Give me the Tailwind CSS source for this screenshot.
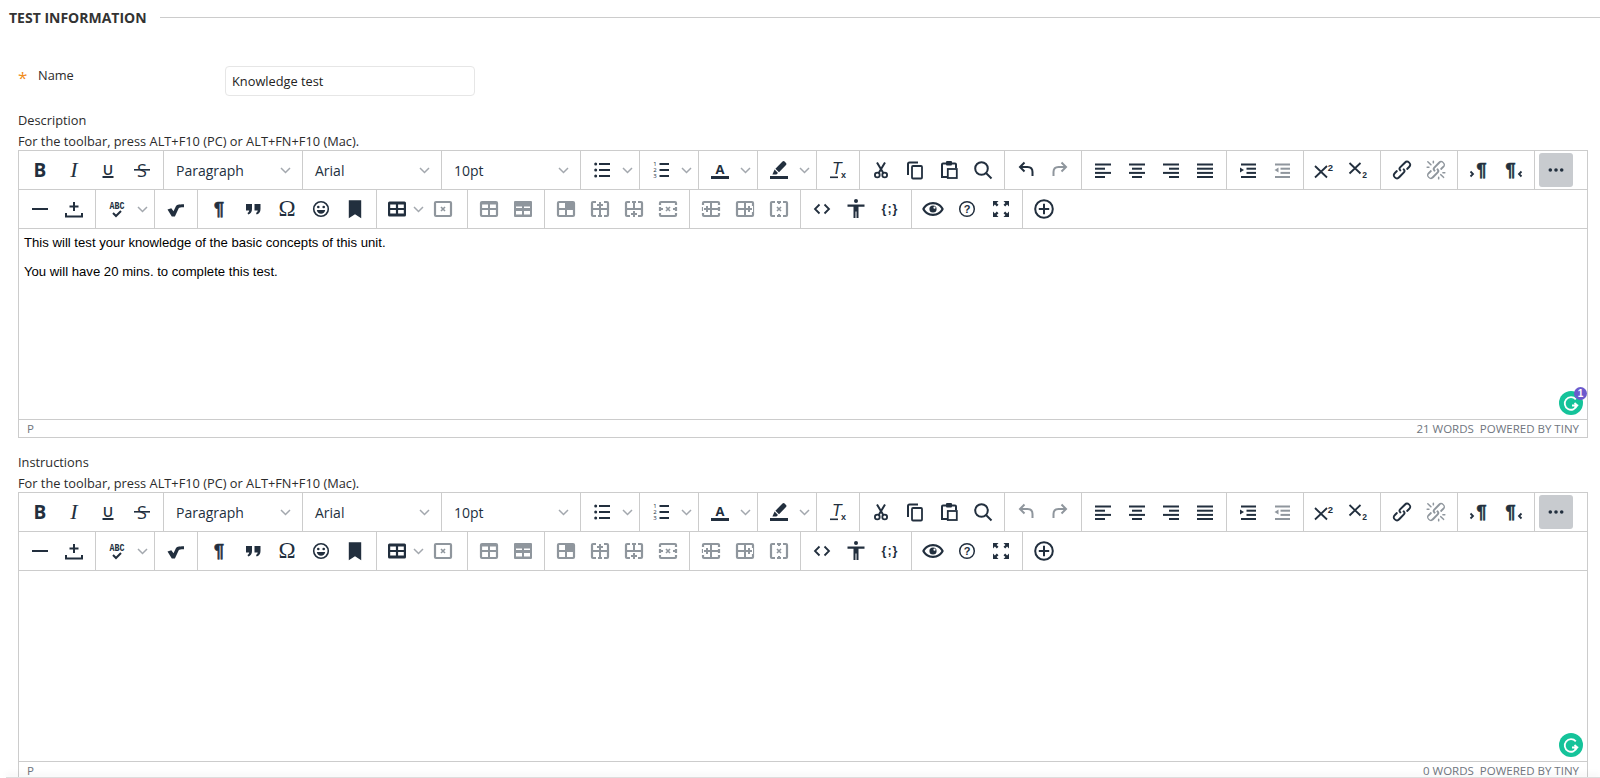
<!DOCTYPE html>
<html lang="en">

<head>
  <meta charset="UTF-8" />
  <meta name="viewport" content="width=device-width, initial-scale=1.0" />
  <title>Test Information</title>
  <script src="https://cdn.jsdelivr.net/npm/@tailwindcss/browser@4"></script>
</head>

<body class="h-screen overflow-hidden bg-white font-['Open_Sans',sans-serif] text-[12.8px] text-[#2b2b2b]">
  <main class="pl-[18px] pr-[12px]">
    <!-- Section heading -->
    <div class="-ml-[9px] -mr-[12px] h-[35px] flex items-center">
      <h1 class="text-[14px] font-bold text-[#333] whitespace-nowrap">TEST INFORMATION</h1>
      <div class="flex-1 ml-[13px] h-px bg-[#ccc]"></div>
    </div>

    <!-- Name -->
    <div class="mt-[31px] flex h-[30px]">
      <span class="w-[20px] pt-[3px] text-[17px] leading-none text-[#f08c1a]">*</span>
      <label class="w-[187px] leading-[18px]">Name</label>
      <div class="w-[250px] h-[30px] border border-[#e6e6e6] rounded-[4px] px-[6px] pt-px flex items-center text-[#222]">Knowledge test</div>
    </div>

    <div id="description" class="mt-[14px]"></div>
    <div id="instructions" class="mt-[14px]"></div>
  </main>

  <!-- Page footer edge -->
  <div class="fixed bottom-0 left-[6px] right-0 h-px bg-[#ddd] shadow-[0_-2px_6px_rgba(0,0,0,0.18)]"></div>

  <script>
    const svg = (inner) => `<svg width="24" height="24" viewBox="0 0 24 24" fill="currentColor">${inner}</svg>`;
    const btn = (inner, cls = "text-[#222f3e]") => `<div class="w-[34px] h-[34px] shrink-0 flex items-center justify-center ${cls}">${svg(inner)}</div>`;
    const off = "text-[#8f969d]";
    const chevron = `<svg width="11" height="7" viewBox="0 0 11 7" fill="none" stroke="#a3a8ae" stroke-width="1.5"><path d="M1 1l4.5 4.5L10 1" /></svg>`;
    const split = (inner) => `<div class="flex items-center">${btn(inner)}<div class="w-[16px] flex justify-center">${chevron}</div></div>`;
    const group = (inner) => `<div class="flex items-center pl-[4px] pr-[4px] border-r border-[#ccc] shrink-0">${inner}</div>`;
    const select = (label) => `<div class="w-[139px] shrink-0 h-full flex items-center justify-between pl-[12px] pr-[11px] border-r border-[#ccc] text-[14px] text-[#222f3e]"><span>${label}</span>${chevron}</div>`;
    const text = (x, y, size, body, extra = "") => `<text x="${x}" y="${y}" font-size="${size}" text-anchor="middle" ${extra}>${body}</text>`;
    const openSans = `font-family="Open Sans"`;
    const sansBold = `font-family="Liberation Sans" font-weight="700"`;
    const pilcrow = `${sansBold} stroke="currentColor" stroke-width="0.6"`;
    const lines = (rows) => rows.map(([x, y, w]) => `<rect x="${x}" y="${y}" width="${w}" height="2" />`).join("");
    const stroke = (d, w = 2) => `<path d="${d}" fill="none" stroke="currentColor" stroke-width="${w}" />`;

    const link = `<path d="M6.2 12.3a1 1 0 0 1 1.4 1.4l-2 2a2 2 0 1 0 2.8 2.8l4.8-4.8a1 1 0 0 0 0-1.4 1 1 0 1 1 1.4-1.3 2.9 2.9 0 0 1 0 4L9.9 20a4 4 0 1 1-5.7-5.7l2-2zm11.6-.6a1 1 0 0 1-1.4-1.4l2-2a2 2 0 1 0-2.8-2.8L10.8 10a1 1 0 0 0 0 1.4 1 1 0 1 1-1.4 1.3 2.9 2.9 0 0 1 0-4L14.1 4a4 4 0 1 1 5.7 5.7l-2 2z" />`;
    const unlink = `<path d="M6.2 12.3a1 1 0 0 1 1.4 1.4l-2.1 2a2 2 0 1 0 2.7 2.8l4.8-4.8a1 1 0 0 0 0-1.4 1 1 0 1 1 1.4-1.3 2.9 2.9 0 0 1 0 4L9.6 20a3.9 3.9 0 0 1-5.5-5.5l2-2zm11.6-.6a1 1 0 0 1-1.4-1.4l2.1-2a2 2 0 1 0-2.7-2.8L11 10.3a1 1 0 0 0 0 1.4A1 1 0 1 1 9.6 13a2.9 2.9 0 0 1 0-4L14.4 4a3.9 3.9 0 0 1 5.5 5.5l-2 2zM7.6 6.3a.8.8 0 0 1-1 1.1L3.3 4.2a.7.7 0 1 1 1-1l3.2 3.1zM5.1 8.6a.8.8 0 0 1 0 1.5H3a.8.8 0 0 1 0-1.5H5zm5-3.5a.8.8 0 0 1-1.5 0V3a.8.8 0 0 1 1.5 0v2zm6 11.8a.8.8 0 0 1 1-1l3.2 3.2a.8.8 0 0 1-1 1L16 17zm-2.2 2a.8.8 0 0 1 1.5 0V21a.8.8 0 0 1-1.5 0V19zm5-3.5a.7.7 0 1 1 0-1.5H21a.8.8 0 0 1 0 1.5H19z" />`;

    // grey table icons share one frame
    const frame = `<rect x="4" y="5" width="16" height="14" rx="1" fill="none" stroke="currentColor" stroke-width="2.2" />`;
    const mid = `<rect x="4" y="11" width="16" height="2" />`;
    const centre = `<rect x="11" y="5" width="2" height="14" />`;
    const gaps = `<path d="M8 3h2v3H8zM14 3h2v3h-2zM8 18h2v3H8zM14 18h2v3h-2z" fill="#fff" />`;
    const sideGaps = `<path d="M2 8h3.500v2H2zM2 14h3.500v2H2zM18.500 8H22v2h-3.500zM18.500 14H22v2h-3.500z" fill="#fff" />`;
    const plus = (x, y) => `<path d="M${x - 1} ${y - 3}h2v2h2v2h-2v2h-2v-2h-2v-2h2z" />`;
    const cross = (x, y) => stroke(`M${x - 2} ${y - 2}l4 4M${x + 2} ${y - 2}l-4 4`, 1.6);

    function toolbar(undoCls) {
      return `
        <div class="flex h-[39px] border-b border-[#ccc]">
          ${group(
            btn(text(12, 18.5, 19, "B", `${openSans} font-weight="700"`)) +
            btn(text(12, 19, 22, "I", `font-family="Liberation Serif" font-style="italic"`)) +
            btn(text(12, 16.5, 14, "U", `${openSans} font-weight="600"`) + `<rect x="6.500" y="18" width="11" height="2" />`) +
            btn(text(12, 18.500, 18, "S", `${openSans} font-weight="500"`) + `<rect x="4" y="11" width="16" height="1.6" />`)
          )}
          ${select("Paragraph")}${select("Arial")}${select("10pt")}
          ${group(split(`<circle cx="5.7" cy="6" r="1.5" /><circle cx="5.7" cy="12" r="1.5" /><circle cx="5.7" cy="18" r="1.5" />` + lines([[9, 5, 11], [9, 11, 11], [9, 17, 11]])))}
          ${group(split(text(6, 8, 6, "1", openSans) + text(6, 14, 6, "2", openSans) + text(6, 20, 6, "3", openSans) + lines([[10.5, 5, 9.5], [10.5, 11, 9.5], [10.5, 17, 9.5]])))}
          ${group(split(text(12, 16, 13, "A", `${openSans} font-weight="700"`) + `<rect x="3" y="18" width="18" height="3" />`))}
          ${group(split(`<path d="M15.5 3.6a1.5 1.5 0 0 1 2.1 0l1.4 1.4a1.5 1.5 0 0 1 0 2.1L12 14.2 8.4 10.7zM7.6 11.6l3.4 3.4-1.6 1.4H5.4z" /><rect x="3" y="18" width="18" height="3" />`))}
          ${group(btn(text(11, 16, 16, "T", `font-family="Liberation Sans" font-style="italic"`) + `<rect x="4" y="18.5" width="8" height="1.6" />` + text(17.5, 19.5, 9, "x", sansBold)))}
          ${group(
            btn(`<circle cx="8.3" cy="17" r="2.4" fill="none" stroke="currentColor" stroke-width="1.8" /><circle cx="15.7" cy="17" r="2.4" fill="none" stroke="currentColor" stroke-width="1.8" />` + stroke("M9.7 15L16 4.5M14.3 15L8 4.5")) +
            btn(stroke("M15 4.5H6.5A1.5 1.5 0 0 0 5 6v11") + `<rect x="9" y="8" width="10" height="12.5" rx="1" fill="none" stroke="currentColor" stroke-width="1.8" />`) +
            btn(stroke("M9 5.5H6A1 1 0 0 0 5 6.5V19h5M15 5.5h3a1 1 0 0 1 1 1V10") + `<rect x="9" y="3" width="6" height="4.500" rx="1" /><rect x="10.8" y="11" width="9" height="9" fill="none" stroke="currentColor" stroke-width="1.8" />`) +
            btn(`<circle cx="10.5" cy="10.5" r="6.3" fill="none" stroke="currentColor" stroke-width="2" />` + stroke("M15 15l5.5 5.5"))
          )}
          ${group(
            btn(stroke("M6 9h7.5c3 0 5 2 5 5v4M10.5 4.5L6 9l4.5 4.5"), undoCls) +
            btn(stroke("M18 9h-7.5c-3 0-5 2-5 5v4M13.5 4.5L18 9l-4.5 4.5"), off)
          )}
          ${group(
            btn(lines([[4, 5.5, 16], [4, 9.7, 10], [4, 13.9, 16], [4, 18, 10]])) +
            btn(lines([[4, 5.5, 16], [7, 9.7, 10], [4, 13.9, 16], [7, 18, 10]])) +
            btn(lines([[4, 5.5, 16], [10, 9.7, 10], [4, 13.9, 16], [10, 18, 10]])) +
            btn(lines([[4, 5.5, 16], [4, 9.7, 16], [4, 13.9, 16], [4, 18, 16]]))
          )}
          ${group(
            btn(lines([[5, 5.5, 15], [10.5, 9.7, 9.5], [10.5, 13.9, 9.5], [5, 18, 15]]) + `<path d="M4 9.500l4 2.500-4 2.500z" />`) +
            btn(lines([[5, 5.5, 15], [10.5, 9.7, 9.5], [10.5, 13.9, 9.5], [5, 18, 15]]) + `<path d="M8.500 9.500l-4 2.500 4 2.500z" />`, off)
          )}
          ${group(
            btn(stroke("M2 8l12 11.500M14 8L2 19.500", 1.800) + text(17.5, 12.500, 9.500, "2", sansBold)) +
            btn(stroke("M2.500 5l11 10.500M13.500 5l-11 10.500", 1.800) + text(17.5, 19.500, 8.500, "2", sansBold))
          )}
          ${group(btn(link) + btn(unlink, off))}
          ${group(
            btn(text(14.500, 18, 18, "¶", pilcrow) + stroke("M3.500 13.500l2.500 2.500-2.500 2.500", 1.800)) +
            btn(text(9.500, 18, 18, "¶", pilcrow) + stroke("M20.500 13.500l-2.500 2.500 2.500 2.500", 1.800))
          )}
          <div class="flex-1 pl-[4px] flex items-center">
            <div class="w-[34px] h-[34px] rounded-[3px] bg-[#c8cbcf] flex items-center justify-center text-[#222f3e]">
              ${svg(`<circle cx="6.3" cy="12" r="1.8" /><circle cx="12" cy="12" r="1.8" /><circle cx="17.7" cy="12" r="1.8" />`)}
            </div>
          </div>
        </div>
        <div class="flex h-[39px] border-b border-[#ccc]">
          ${group(
            btn(`<rect x="4" y="11" width="16" height="2" />`) +
            btn(stroke("M12 5v9M7.5 9.5h9", 2) + stroke("M4 16v3.5h16V16", 2))
          )}
          ${group(split(`<text x="4.500" y="12" font-size="10" textLength="15" lengthAdjust="spacingAndGlyphs" font-family="Liberation Mono" font-weight="700">ABC</text>` + stroke("M8 16l3 3 5-5", 2)))}
          ${group(btn(`<path d="M3.500 12.500l3.800-1.200 2.200 3 2.400-5c.7-1.300 2.200-2 8.100-2v3c-3.800 0-4.900.3-5.500 1.500L10.900 19.500H7.800z" />`))}
          ${group(
            btn(text(12, 18, 18, "¶", pilcrow)) +
            btn(`<path d="M5 7h6v5c0 3-1.3 4.6-3.8 5.4l-.7-1.4c1-.5 1.6-1.2 1.7-2.5H5zM13.5 7h6v5c0 3-1.3 4.6-3.8 5.4l-.7-1.4c1-.5 1.6-1.2 1.7-2.5h-3.2z" />`) +
            btn(text(12, 19, 23, "Ω", `font-family="Liberation Serif"`)) +
            btn(`<circle cx="12" cy="12" r="7.3" fill="none" stroke="currentColor" stroke-width="1.6" /><circle cx="9.3" cy="10" r="1.3" /><circle cx="14.7" cy="10" r="1.3" /><path d="M7.8 13h8.4c-.3 2.4-2 3.8-4.2 3.8S8.100 15.400 7.800 13z" />`) +
            btn(`<path d="M5.800 3.200h12.400v18l-6.200-4-6.200 4z" />`)
          )}
          <div class="flex items-center pl-[4px] pr-[4px] border-r border-[#ccc] shrink-0 w-[91px]">
            <div class="w-[32px] flex justify-center text-[#222f3e]">${svg(`<path fill-rule="evenodd" d="M4.500 4.500h15A1.500 1.500 0 0 1 21 6v12a1.500 1.500 0 0 1-1.500 1.500h-15A1.500 1.500 0 0 1 3 18V6a1.500 1.500 0 0 1 1.500-1.500zM5.200 7.400v3.500h5.700V7.400zm7.900 0v3.500h5.700V7.400zM5.200 13v3.600h5.700V13zm7.900 0v3.600h5.700V13z" />`)}</div>
            <div class="w-[13px]">${chevron}</div>
            ${btn(frame + cross(12, 12), off)}
          </div>
          ${group(
            btn(frame + mid + centre + `<rect x="4" y="5" width="16" height="2.500" />`, off) +
            btn(`<path fill-rule="evenodd" d="M4 4h16a1 1 0 0 1 1 1v14a1 1 0 0 1-1 1H4a1 1 0 0 1-1-1V5a1 1 0 0 1 1-1zm1 5.500V11h6V9.500zm8 0V11h6V9.500zM5 14v3.500h6V14zm8 0v3.500h6V14z" />`, off)
          )}
          ${group(
            btn(frame + mid + centre + `<rect x="12" y="5" width="8" height="7" />`, off) +
            btn(frame + mid + centre + gaps + `<rect x="9" y="4" width="6" height="7" fill="#fff" />` + plus(12, 8), off) +
            btn(frame + mid + centre + gaps + `<rect x="9" y="13" width="6" height="7" fill="#fff" />` + plus(12, 17), off) +
            btn(frame + sideGaps + mid + `<rect x="7" y="9" width="10" height="6" fill="#fff" />` + cross(12, 12), off)
          )}
          ${group(
            btn(frame + mid + centre + sideGaps + `<rect x="4" y="9" width="7" height="6" fill="#fff" />` + plus(8, 12), off) +
            btn(frame + mid + centre + `<rect x="13" y="9" width="7" height="6" fill="#fff" />` + plus(16, 12), off) +
            btn(frame + gaps + centre + `<rect x="9" y="7" width="6" height="10" fill="#fff" />` + cross(12, 12), off)
          )}
          ${group(
            btn(stroke("M9.500 7.500L5 12l4.500 4.500M14.500 7.500L19 12l-4.500 4.500", 1.800)) +
            btn(`<circle cx="12" cy="4" r="2" /><path d="M3.500 7.500h17v2.300h-6V21h-2v-6.500h-1V21h-2V9.800h-6z" />`) +
            btn(text(12, 16, 12.500, "{;}", `${sansBold} letter-spacing="1"`))
          )}
          ${group(
            btn(`<path fill-rule="evenodd" d="M12 5C7 5 3 8 1.200 12 3 16 7 19 12 19s9-3 10.800-7C21 8 17 5 12 5zm0 2.200c3.700 0 6.800 2 8.400 4.800-1.600 2.800-4.700 4.800-8.400 4.800S5.200 14.800 3.600 12C5.200 9.200 8.300 7.200 12 7.200z" /><circle cx="12" cy="12" r="3.600" /><circle cx="13.500" cy="10.700" r="1.100" fill="#fff" />`) +
            btn(`<circle cx="12" cy="12" r="7.300" fill="none" stroke="currentColor" stroke-width="1.500" />` + text(12, 15.800, 11, "?", sansBold)) +
            btn(`<path d="M4 4h5.500L7.600 5.900 9.500 7.800 7.800 9.500 5.900 7.600 4 9.500zM20 4v5.500l-1.900-1.900-1.900 1.900-1.700-1.700 1.900-1.900L14.500 4zM4 20v-5.500l1.900 1.900 1.900-1.900 1.700 1.700-1.900 1.900L9.500 20zM20 20h-5.500l1.900-1.900-1.900-1.900 1.700-1.700 1.900 1.900 1.900-1.900z" />`)
          )}
          <div class="flex items-center pl-[4px]">
            ${btn(`<circle cx="12" cy="12" r="8.800" fill="none" stroke="currentColor" stroke-width="2" />` + stroke("M12 6.800v10.400M6.800 12h10.400"))}
          </div>
        </div>`;
    }

    const grammarlyG = `<svg width="24" height="24" viewBox="0 0 24 24"><circle cx="12" cy="12" r="12" fill="#15c39a" /><path d="M16.800 8.300A6.300 6.300 0 1 0 18 14.500h-5M15.500 12l2.800 2.500-2.800 2.500" fill="none" stroke="#fff" stroke-width="1.800" /></svg>`;

    function editor(label, body, words, undoCls, badge) {
      return `
        <div class="h-[20px] leading-[20px]">${label}</div>
        <div class="h-[20px] leading-[22px]">For the toolbar, press ALT+F10 (PC) or ALT+FN+F10 (Mac).</div>
        <div class="border border-[#ccc]">
          ${toolbar(undoCls)}
          <div class="relative h-[190px] pl-[5px] pt-[5px] font-['Liberation_Sans',sans-serif] text-[13.15px] leading-[18.5px] text-black">
            ${body}
            <div class="absolute right-[4px] bottom-[4px] w-[24px] h-[24px]">${grammarlyG}${badge}</div>
          </div>
          <div class="h-[18px] border-t border-[#ccc] pl-[8px] pr-[8px] flex items-center justify-between text-[11.5px] text-[#6f7680]">
            <span>P</span>
            <span class="whitespace-pre">${words} WORDS  POWERED BY TINY</span>
          </div>
        </div>`;
    }

    document.getElementById("description").innerHTML = editor(
      "Description",
      `<p class="mb-[10px]">This will test your knowledge of the basic concepts of this unit.</p><p>You will have 20 mins. to complete this test.</p>`,
      21,
      "text-[#222f3e]",
      `<div class="absolute -top-[4px] -right-[4px] w-[13px] h-[13px] rounded-full bg-[#6b5acd] text-white text-[10px] font-bold leading-[13px] text-center">1</div>`
    );
    document.getElementById("instructions").innerHTML = editor("Instructions", "", 0, off, "");
  </script>
</body>

</html>
